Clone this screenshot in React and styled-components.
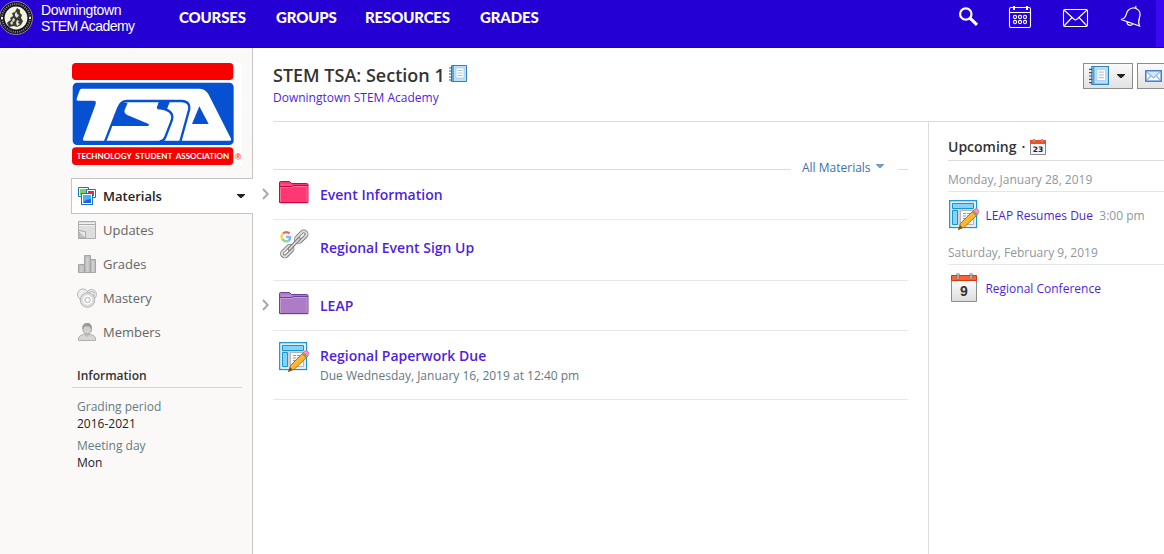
import React from 'react';
import styled, { createGlobalStyle } from 'styled-components';

const Global = createGlobalStyle`
  * { box-sizing: border-box; }
  body { margin: 0; background: #fff; font-family: "Open Sans", sans-serif; font-size: 12px; color: #333; overflow: hidden; }
  svg { display: block; flex: none; }
`;
const Page = styled.div`height: 554px; width: 1164px; display: flex; flex-direction: column; overflow: hidden;`;

/* Header */
const Header = styled.header`height: 48px; flex: none; display: flex; background: #2500d5; border-bottom: 1px solid #1a1a52; color: #fff;`;
const Brand = styled.div`display: flex; width: 179px; flex: none; gap: 8px;`;
const BrandName = styled.div`font: 400 14px/16px "Liberation Sans", sans-serif; padding-top: 2px; white-space: nowrap; & > span { display: block; letter-spacing: ${p => p.$ls || -0.35}px; } & > span + span { letter-spacing: -.58px; }`;
const Nav = styled.nav`display: flex; flex: 1;`;
const NavItem = styled.a`width: ${p => p.$w}px; font: 900 15px/34px Lato, sans-serif; letter-spacing: -.15px; white-space: nowrap;`;
const Tools = styled.div`display: flex; width: 198px; flex: none; padding-top: 5px;`;
const Tool = styled.div`width: ${p => p.$w}px; height: 24px; flex: none;`;
const Edge = styled.div`width: 8px; background: #3a08f2;`;

/* Sidebar */
const Body = styled.div`display: flex; flex: 1;`;
const Sidebar = styled.aside`width: 253px; flex: none; background: #faf9f7; border-right: 1px solid #c4c4c4; padding: 15px 0 0 71px;`;
const LogoBox = styled.div`background: #fff; width: 170px; height: 102px; margin-left: 1px;`;
const Menu = styled.nav`margin: 13px -1px 0 0; display: flex; flex-direction: column;`;
const MenuItem = styled.a`
  height: ${p => (p.$active ? 36 : 34)}px; display: flex; align-items: center; gap: 6px; padding-left: ${p => (p.$active ? 5 : 6)}px; padding-right: 8px;
  font-size: 13px; font-weight: ${p => (p.$active ? 600 : 400)}; color: ${p => (p.$active ? '#222' : '#666')};
  ${p => p.$active && 'background: #fff; border: 1px solid #c4c4c4; border-right: 0; margin-bottom: -1px;'}
  & > span { flex: 1; }
`;
const Info = styled.section`padding-top: 18px; width: 171px; padding-left: 1px;`;
const InfoTitle = styled.h3`margin: 0 0 10px; padding-left: 5px; height: 21px; font-size: 12px; line-height: 18px; font-weight: 600; color: #333; border-bottom: 1px solid #c9d7e8;`;
const InfoItem = styled.div`padding-left: 5px; margin-bottom: 5px; line-height: 17px; font-size: 12px; color: #222;`;
const Muted = styled.div`color: #667b86;`;

/* Main */
const Main = styled.main`flex: 1; display: flex; flex-direction: column; padding-left: 20px;`;
const CourseHead = styled.div`height: 74px; border-bottom: 1px solid #dcdcdc; display: flex; justify-content: space-between; padding-top: 15px;`;
const Title = styled.h1`margin: -1px 0 1px; display: flex; gap: 5px; font-size: 18px; line-height: 26px; font-weight: 600; color: #333; white-space: nowrap; & svg { margin: 3px 0 0 -1px; }`;
const School = styled.a`display: block; color: #4f1fe0; line-height: 17px; font-size: 12px;`;
const Buttons = styled.div`display: flex; gap: 4px; width: 81px; overflow: hidden;`;
const Button = styled.div`width: 50px; flex: none; height: 26px; border: 1px solid #8d8d8d; background: linear-gradient(#fafafa, #e2e2e2); display: flex; align-items: center; gap: ${p => p.$gap || 0}px; padding-left: ${p => p.$pl}px;`;
const Columns = styled.div`flex: 1; display: flex;`;
const Materials = styled.section`width: 655px; flex: none; padding: 35px 20px 0 0;`;
const Filter = styled.div`display: flex; height: 23px; align-items: center; color: #3d6fb0; line-height: 23px; margin-bottom: -10px;`;
const Rule = styled.i`height: 1px; margin-top: 2px; background: #dcdcdc; ${p => (p.$w ? `width: ${p.$w}px;` : 'flex: 1;')}`;
const FilterLabel = styled.span`display: flex; align-items: center; justify-content: space-between; width: 107px; padding: 0 14px 2px 11px; & svg { margin-top: -3px; }`;
const Row = styled.div`height: ${p => p.$h}px; border-bottom: 1px solid #e8e8e8; display: flex;`;
const Disclosure = styled.div`width: 16px; flex: none; margin-left: -11px; padding-top: ${p => p.$top}px;`;
const RowIcon = styled.div`width: 42px; flex: none; padding: ${p => p.$top}px 0 0 1px;`;
const RowText = styled.div`padding-top: ${p => p.$top}px; font-size: 12px; line-height: 20px; color: #667780;`;
const RowTitle = styled.a`display: block; font-size: 14px; line-height: 20px; font-weight: 600; color: #4f1fe0;`;
const Upcoming = styled.section`flex: 1; border-left: 1px solid #dcdcdc; padding: 15px 0 0 19px;`;
const UpTitle = styled.h2`margin: 0; height: 24px; border-bottom: 1px solid #dcdcdc; display: flex; gap: 5px; font-size: 14px; font-weight: 600; line-height: 20px; color: #333; & svg { margin-top: 2px; }`;
const DateLabel = styled.div`height: ${p => p.$h}px; padding-top: ${p => p.$h - 22}px; line-height: 20px; color: #8f979b; border-bottom: 1px solid #e6e6e6;`;
const Event = styled.div`display: flex; align-items: center; height: 49px; gap: ${p => p.$gap}px; padding: 0 0 2px ${p => p.$pl}px; & a { color: #4f1fe0; } & span { color: #8f979b; margin-left: 1px; } & svg { margin-top: ${p => p.$lift || 0}px; }`;

const Seal = () => (
  <svg width="33" height="36" viewBox="0 0 33 36">
    <circle cx="16" cy="18" r="16.500" fill="#17152c" stroke="#bdb98f" strokeWidth=".7" />
    <circle cx="16" cy="18" r="14" fill="none" stroke="#8f8a72" strokeWidth="1.800" strokeDasharray="1 1.200" />
    <circle cx="16" cy="18" r="11.400" fill="#f6f4dd" />
    <path d="M17 8l3 2 0 3 2 2-1 3 2 3-2 4-4 2-3-1-5 1-2-4 2-2 2-1-1-2 3-2-1-3 3-1z" fill="#3a3a36" />
    <path d="M15 13l2-1v2l2 1-2 3-2-2zM10 23l2-2 1 2-1 2zM13 18l2 1-1 3-2-1zM17 20l2 1-1 2 2 1-3 2-1-3z" fill="#e6e4cf" />
    <path d="M1 17h2v2H1zM29 17h2v2h-2z" fill="#f4edb5" />
  </svg>
);
const SearchIcon = () => <svg width="22" height="24" viewBox="0 0 22 24" fill="none" stroke="#fff"><circle cx="7.800" cy="9" r="5.700" strokeWidth="2.200" /><path d="M12 13.200l7 6.600" strokeWidth="3.200" /></svg>;
const CalendarIcon = () => (
  <svg width="24" height="24" viewBox="0 0 24 24" fill="none" stroke="#fff" strokeWidth="1.100">
    <rect x="1.500" y="2.500" width="21" height="20" rx="1.500" /><path d="M1.500 7.500h21" /><path d="M6 1v4M19 1v4" strokeWidth="2" />
    {[12, 17].map(y => [7, 12, 17].map(x => <circle key={`${x}-${y}`} cx={x} cy={y} r="1.600" />))}
  </svg>
);
const MailIcon = () => <svg width="28" height="24" viewBox="0 0 28 24" fill="none" stroke="#fff" strokeWidth="1.100"><rect x="1.500" y="4.500" width="24" height="17" rx="1.500" /><path d="M2 5l9.800 9q1.700 1.600 3.400 0L25 5M2 21l8-8.500M25 21l-8-8.500" /></svg>;
const BellIcon = () => <svg width="24" height="24" viewBox="0 0 24 24" fill="none" stroke="#fff" strokeWidth="1.200"><path d="M2 14.500c6-1 4.500-6 7-9 2.500-2.800 6.500-3.300 9-1.500 3.500 2 3.500 5.500 2.500 8.500s-1.500 5 0 8.500zM16.500 3l.5-2M8 16.700c0 4 4.300 4.700 5.800 1.700" /></svg>;

const TsaLogo = () => (
  <svg width="170" height="102" viewBox="24 39 510 306">
    <rect x="24" y="39" width="484" height="51" rx="11" fill="#f80000" />
    <rect x="26" y="98" width="483" height="187" rx="13" fill="#0650d2" />
    <path d="M53 116H405q18 0 28 16L501 266q2 6-5 6H61q-6 0-4-6l38-104q3-10-7-10H42q-6 0-4-6l9-25q1-5 6-5z" fill="#fff" />
    <path d="M169 158h22l-9 22q-3 8 6 14l66 28v6H140z" fill="#0650d2" />
    <path d="M284 156h33l-8 22-31-4z" fill="#0650d2" />
    <path d="M123 275l39-100q9-22 26-22H354q26 2 21 27L349 275" fill="none" stroke="#0650d2" strokeWidth="7" />
    <path d="M280 174q44 3 45 27 0 7-4 16l-17 44q-5 13-17 13" fill="none" stroke="#0650d2" strokeWidth="7" />
    <path d="M406 169l28 53h-50z" fill="#0650d2" />
    <rect x="24" y="292" width="484" height="53" rx="11" fill="#f80000" />
    <text x="38" y="327" textLength="458" lengthAdjust="spacingAndGlyphs" fill="#fff" fontFamily="Lato, sans-serif" fontWeight="700" fontSize="25" wordSpacing="6">TECHNOLOGY STUDENT ASSOCIATION</text>
    <text x="513" y="329" fill="#f33" fontFamily="Liberation Sans, sans-serif" fontWeight="700" fontSize="25">®</text>
  </svg>
);

const MaterialsIcon = () => <svg width="20" height="20" viewBox="0 0 20 20"><path d="M1.500 1.500h10v9h-10z" fill="#fff" stroke="#1877b8" /><path d="M3 3h7v6H3z" fill="#7ad35a" /><path d="M9.500 3.500h9v8h-9z" fill="#fff" stroke="#1877b8" /><path d="M11 5h6v5h-6z" fill="#e32b42" /><rect x="4.500" y="7.500" width="11" height="11" fill="#fff" stroke="#1877b8" /><path d="M6 9h8v8H6z" fill="#3fb3f5" /><path d="M6 17l3-3 5-1v4z" fill="#3157ef" /></svg>;
const UpdatesIcon = () => <svg width="20" height="20" viewBox="0 0 20 20"><path d="M1.500 1.500h17v17h-17z" fill="#dedede" stroke="#adadad" /><path d="M2 4.500h16" stroke="#aaa" /><path d="M2 3.500h16M2 5.500h16" stroke="#f3f3f3" /><path d="M1.500 10.500l7 1v7h-7z" fill="#e9e9e9" stroke="#aaa" /><path d="M2 12l6 6H2z" fill="#c4c4c4" stroke="#aaa" strokeWidth=".7" /></svg>;
const GradesIcon = () => <svg width="20" height="20" viewBox="0 0 20 20" stroke="#a5a5a5"><path d="M1.500 10.500h6v8h-6zM7.500 1.500h6v17h-6zM13.500 5.500h5v13h-5z" fill="#bdbdbd" /><path d="M4.500 12v6M10.500 3v15M16 7v11" stroke="#d0d0d0" strokeWidth="2" /></svg>;
const MasteryIcon = () => <svg width="20" height="20" viewBox="0 0 20 20"><g fill="#eee" stroke="#b5b5b5"><circle cx="6" cy="6.500" r="5.500" /><circle cx="14.500" cy="6.500" r="5" /><circle cx="14.500" cy="6.500" r="3" /><circle cx="10.500" cy="12" r="7.300" fill="#ddd" /></g><circle cx="10.500" cy="12" r="4" fill="#ccc" stroke="#fff" strokeWidth="1.500" /><circle cx="10.500" cy="12" r="1.800" fill="#fff" /></svg>;
const MembersIcon = () => <svg width="20" height="20" viewBox="0 0 20 20"><path d="M1.500 18.500v-2.500q.5-3 6-4h5q5.500 1 6 4v2.500z" fill="#d5d5d5" stroke="#b0b0b0" /><path d="M7.500 10h5v3l-2.500 2-2.500-2z" fill="#bbb" /><rect x="6" y="1.500" width="8.500" height="10.500" rx="4.200" fill="#d0d0d0" stroke="#a5a5a5" /><path d="M5.500 8V4q1-3 5-3t4 5v2l-2-3.500h-5z" fill="#999" /></svg>;

const Caret = ({ c = '#222', w = 8 }) => <svg width={w} height="4" viewBox="0 0 8 4"><path d="M0 0h8v.8L4.700 4H3.300L0 .8z" fill={c} /></svg>;
const Notebook = ({ size = 18 }) => (
  <svg width={size} height={size} viewBox="0 0 18 18"><path d="M2.500.5h15v16h-15z" fill="#b8e2fa" stroke="#2f84bd" /><path d="M3 1h2v15H3z" fill="#58a5d7" /><path d="M7 3h8v10H7z" fill="#fff" stroke="#a5ccee" strokeWidth=".8" /><path d="M8.500 5.500h5M8.500 8h5M8.500 10.500h5" stroke="#9ab0c3" strokeWidth=".8" /><path d="M0 3h3M0 6h3M0 9h3M0 12h3M0 15h3" stroke="#4a5660" /></svg>
);
const Envelope = () => <svg width="17" height="12" viewBox="0 0 17 12"><rect x=".8" y=".8" width="15.400" height="10.400" fill="#fff" stroke="#3b7cc9" strokeWidth="1.500" /><path d="M2 10l4-4.500M15 10l-4-4.500M2 2l6.500 6L15 2" fill="#d7e7fb" stroke="#91b5e8" strokeWidth="1.200" /></svg>;
const Chevron = () => <svg width="8" height="12" viewBox="0 0 8 12"><path d="M1 1l4.700 5L1 11" fill="none" stroke="#aaa" strokeWidth="2" /></svg>;
const Folder = ({ fill, stroke, light }) => <svg width="30" height="24" viewBox="0 0 30 24"><path d="M1 22.500h28" stroke="#ddd" /><path d="M.500 21.500V1.500Q.500.500 1.500.500h9l2 2h15q1.500 0 1.500 1v18z" fill={fill} stroke={stroke} /><path d="M1.500 4h11" stroke={light} /><path d="M1 5.500h12l1-1h15" stroke={stroke} fill="none" /><path d="M1.500 21V6.500h12l1-1h13.500V21" stroke={light} fill="none" /></svg>;
const LinkIcon = () => (
  <svg width="31" height="31" viewBox="0 0 31 31">
    <g fill="none" strokeWidth="2.400"><path d="M10.500 4.500Q7.500 1.800 4 4.400" stroke="#f0625e" /><path d="M4 4.400Q1.400 7 3.200 10" stroke="#f9d54b" /><path d="M3.200 10q2.500 3.500 6.500 1.800" stroke="#8bd59a" /><path d="M9.500 11.800Q11.500 10.500 11 8H7" stroke="#7fb8fa" /></g>
    <g fill="none" stroke="#777" strokeWidth="3.800"><rect x="16" y="5" width="12.500" height="5.500" rx="2.700" transform="rotate(-45 22.200 7.700)" /><rect x="2" y="19.500" width="12.500" height="5.500" rx="2.700" transform="rotate(-45 8.200 22.200)" /></g>
    <g fill="none" stroke="#ddd" strokeWidth="2"><rect x="16" y="5" width="12.500" height="5.500" rx="2.700" transform="rotate(-45 22.200 7.700)" /><rect x="2" y="19.500" width="12.500" height="5.500" rx="2.700" transform="rotate(-45 8.200 22.200)" /></g>
    <path d="M10.500 20l9.500-10" stroke="#777" strokeWidth="3.800" strokeLinecap="round" /><path d="M10.500 20l9.500-10" stroke="#ddd" strokeWidth="1.800" strokeLinecap="round" />
  </svg>
);
const Assignment = () => (
  <svg width="31" height="31" viewBox="0 0 31 31">
    <rect x=".7" y=".7" width="26.800" height="26.800" fill="#fff" stroke="#1297d8" strokeWidth="1.300" />
    <path d="M2.500 2.500h23v23h-23z" fill="#d2d2d2" />
    <path d="M3.500 3.500h21v5h-21zM3.500 10.500h5v14h-5z" fill="#83d3fb" stroke="#1697d2" />
    <path d="M11.500 10.500h13v14h-13z" fill="#f7f7f7" stroke="#b5b5b5" /><path d="M14 13.500h9M14 16h9M14 18.500h7M14 21h5" stroke="#999" strokeDasharray="3 1" />
    <path d="M9.500 29.500l2-6L24.500 10.500l4 4L15.500 27z" fill="#ffb52e" stroke="#a5651e" strokeWidth=".9" />
    <path d="M24.500 10.500l1.500-1.500q1.500-1 3 .5t.5 3L28.500 14.500z" fill="#f297c8" stroke="#c56b9b" strokeWidth=".8" /><path d="M23.500 11.500l4 4" stroke="#888" strokeWidth="1.500" /><path d="M9.300 29.700l1.800-4.500 2.500 2.500z" fill="#6b4b31" />
  </svg>
);
const SmallCal = () => <svg width="16" height="16" viewBox="0 0 16 16"><path d="M.500 3h15v12.500h-15z" fill="#f5f5f5" stroke="#888" /><path d="M0 1h16v4H0z" fill="#ee5128" /><path d="M4 0v3M12 0v3" stroke="#999" strokeWidth="2" /><text x="8" y="13" textAnchor="middle" fontFamily="DejaVu Sans, sans-serif" fontSize="7.500" fill="#222">23</text></svg>;
const DayCal = () => <svg width="27" height="30" viewBox="0 0 27 30"><defs><linearGradient id="dayPaper" x2="0" y2="1"><stop stopColor="#fff" /><stop offset="1" stopColor="#ddd" /></linearGradient></defs><path d="M.500 6h25v22.500h-25z" fill="url(#dayPaper)" stroke="#8d8d8d" /><path d="M.500 2.500h25v5h-25z" fill="#ff632f" stroke="#dc3512" /><path d="M7 .500v6M20 .500v6" stroke="#777" strokeWidth="3" /><path d="M7 1v5M20 1v5" stroke="#ddd" /><text x="13" y="23" textAnchor="middle" fontFamily="Liberation Sans, sans-serif" fontWeight="700" fontSize="14" fill="#333">9</text></svg>;

export default function App() {
  return (
    <Page>
      <Global />
      <Header>
        <Brand><Seal /><BrandName><span>Downingtown</span><span>STEM Academy</span></BrandName></Brand>
        <Nav>
          <NavItem $w={97}>COURSES</NavItem><NavItem $w={89}>GROUPS</NavItem><NavItem $w={115}>RESOURCES</NavItem><NavItem $w={80}>GRADES</NavItem>
        </Nav>
        <Tools><Tool $w={50}><SearchIcon /></Tool><Tool $w={54}><CalendarIcon /></Tool><Tool $w={57}><MailIcon /></Tool><Tool $w={24}><BellIcon /></Tool></Tools>
        <Edge />
      </Header>
      <Body>
        <Sidebar>
          <LogoBox><TsaLogo /></LogoBox>
          <Menu>
            <MenuItem $active><MaterialsIcon /><span>Materials</span><Caret /></MenuItem>
            <MenuItem><UpdatesIcon /><span>Updates</span></MenuItem>
            <MenuItem><GradesIcon /><span>Grades</span></MenuItem>
            <MenuItem><MasteryIcon /><span>Mastery</span></MenuItem>
            <MenuItem><MembersIcon /><span>Members</span></MenuItem>
          </Menu>
          <Info>
            <InfoTitle>Information</InfoTitle>
            <InfoItem><Muted>Grading period</Muted>2016-2021</InfoItem>
            <InfoItem><Muted>Meeting day</Muted>Mon</InfoItem>
          </Info>
        </Sidebar>
        <Main>
          <CourseHead>
            <div><Title>STEM TSA: Section 1 <Notebook /></Title><School>Downingtown STEM Academy</School></div>
            <Buttons><Button $pl={5} $gap={8}><Notebook size={20} /><Caret /></Button><Button $pl={7}><Envelope /></Button></Buttons>
          </CourseHead>
          <Columns>
            <Materials>
              <Filter><Rule /><FilterLabel>All Materials <Caret c="#6c9fc9" w={8} /></FilterLabel><Rule $w={10} /></Filter>
              <Row $h={50}><Disclosure $top={18}><Chevron /></Disclosure><RowIcon $top={11}><Folder fill="#ff3875" stroke="#c9083f" light="#ff6f9b" /></RowIcon><RowText $top={15}><RowTitle>Event Information</RowTitle></RowText></Row>
              <Row $h={61}><Disclosure /><RowIcon $top={9}><LinkIcon /></RowIcon><RowText $top={18}><RowTitle>Regional Event Sign Up</RowTitle></RowText></Row>
              <Row $h={50}><Disclosure $top={18}><Chevron /></Disclosure><RowIcon $top={11}><Folder fill="#ad7cc5" stroke="#69449a" light="#c49bd7" /></RowIcon><RowText $top={15}><RowTitle>LEAP</RowTitle></RowText></Row>
              <Row $h={69}><Disclosure /><RowIcon $top={11}><Assignment /></RowIcon><RowText $top={15}><RowTitle>Regional Paperwork Due</RowTitle>Due Wednesday, January 16, 2019 at 12:40 pm</RowText></Row>
            </Materials>
            <Upcoming>
              <UpTitle>Upcoming <span>·</span><SmallCal /></UpTitle>
              <DateLabel $h={31}>Monday, January 28, 2019</DateLabel>
              <Event $pl={1} $gap={5.4}><Assignment /><a>LEAP Resumes Due</a><span>3:00 pm</span></Event>
              <DateLabel $h={24}>Saturday, February 9, 2019</DateLabel>
              <Event $pl={3} $gap={7.4} $lift={-2}><DayCal /><a>Regional Conference</a></Event>
            </Upcoming>
          </Columns>
        </Main>
      </Body>
    </Page>
  );
}
